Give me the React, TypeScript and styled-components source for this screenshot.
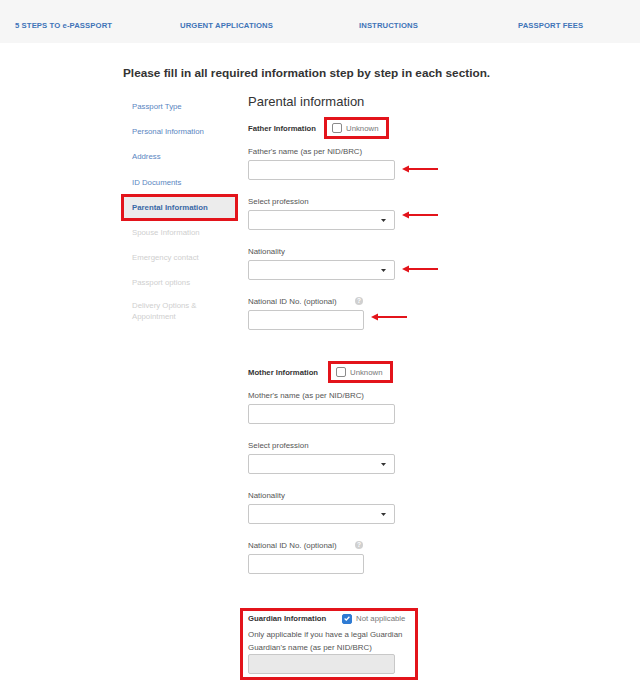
import styled, { createGlobalStyle } from 'styled-components';

const GlobalStyle = createGlobalStyle`
  body {
    margin: 0;
    background: #fff;
    font-family: "Liberation Sans", Arial, sans-serif;
    color: #333;
  }
`

const navItems = ['5 STEPS TO e-PASSPORT', 'URGENT APPLICATIONS', 'INSTRUCTIONS', 'PASSPORT FEES']

const sideItems = [
  { label: 'Passport Type', state: 'done' },
  { label: 'Personal Information', state: 'done' },
  { label: 'Address', state: 'done' },
  { label: 'ID Documents', state: 'done' },
  { label: 'Parental Information', state: 'active' },
  { label: 'Spouse Information', state: 'todo' },
  { label: 'Emergency contact', state: 'todo' },
  { label: 'Passport options', state: 'todo' },
  { label: 'Delivery Options & Appointment', state: 'todo' },
]

const Arrow = ({ shift = 0 }: { shift?: number }) => (
  <ArrowSvg width="36" height="8" viewBox="0 0 36 8" $shift={shift}>
    <path d="M5 4 H36" stroke="#e3141b" strokeWidth="2" />
    <path d="M0 4 L7 0.5 L7 7.5 Z" fill="#e3141b" />
  </ArrowSvg>
)

const Caret = () => (
  <CaretSvg width="5" height="3" viewBox="0 0 5 3">
    <path d="M0 0 H5 L2.5 3 Z" fill="#333" />
  </CaretSvg>
)

const HelpIcon = () => (
  <HelpSvg width="8" height="8" viewBox="0 0 8 8">
    <circle cx="4" cy="4" r="4" fill="#d0d0d0" />
    <text x="4" y="6.3" fontSize="6.5" fontWeight="bold" textAnchor="middle" fill="#fff" fontFamily="Liberation Sans, sans-serif">?</text>
  </HelpSvg>
)

interface FieldProps {
  label: string
  kind?: 'text' | 'select'
  short?: boolean
  help?: boolean
  arrow?: boolean
  arrowShift?: number
}

const Field = ({ label, kind = 'text', short, help, arrow, arrowShift }: FieldProps) => (
  <FieldGroup>
    <LabelRow $short={short}>
      <FieldLabel>{label}</FieldLabel>
      {help && <HelpIcon />}
    </LabelRow>
    <ControlRow>
      <Control $short={short}>
        {kind === 'select' && <Caret />}
      </Control>
      {arrow && <Arrow shift={arrowShift} />}
    </ControlRow>
  </FieldGroup>
)

const PersonBlock = ({ who, arrows, titleWidth }: { who: string, arrows?: boolean, titleWidth: number }) => (
  <>
    <SectionRow>
      <SectionTitle $width={titleWidth}>{who} Information</SectionTitle>
      <Highlight>
        <CheckBox />
        <CheckLabel>Unknown</CheckLabel>
      </Highlight>
    </SectionRow>
    <FirstField>
      <Field label={`${who}'s name (as per NID/BRC)`} arrow={arrows} arrowShift={-1} />
    </FirstField>
    <Field label="Select profession" kind="select" arrow={arrows} arrowShift={-5} />
    <Field label="Nationality" kind="select" arrow={arrows} arrowShift={-1} />
    <Field label="National ID No. (optional)" short help arrow={arrows} arrowShift={-3} />
  </>
)

export default function App() {
  return (
    <>
      <GlobalStyle />
      <NavBar>
        {navItems.map((item) => <NavLink key={item}>{item}</NavLink>)}
      </NavBar>
      <Main>
        <PageTitle>Please fill in all required information step by step in each section.</PageTitle>
        <Columns>
          <Sidebar>
            {sideItems.map((item) => (
              <SideItem key={item.label} $state={item.state}>{item.label}</SideItem>
            ))}
          </Sidebar>
          <Form>
            <FormTitle>Parental information</FormTitle>
            <PersonBlock who="Father" arrows titleWidth={76} />
            <MotherSpacer />
            <PersonBlock who="Mother" titleWidth={80} />
            <GuardianBox>
              <GuardianHead>
                <SectionTitle $width={90}>Guardian Information</SectionTitle>
                <CheckBox $checked>
                  <svg width="6" height="5" viewBox="0 0 6 5">
                    <path d="M0.6 2.5 L2.3 4 L5.4 0.8" stroke="#fff" strokeWidth="1.3" fill="none" />
                  </svg>
                </CheckBox>
                <CheckLabel>Not applicable</CheckLabel>
              </GuardianHead>
              <GuardianNote>Only applicable if you have a legal Guardian</GuardianNote>
              <GuardianNote>Guardian's name (as per NID/BRC)</GuardianNote>
              <Control $disabled />
            </GuardianBox>
          </Form>
        </Columns>
      </Main>
    </>
  )
}

const NavBar = styled.nav`
  height: 43px;
  background: #f6f6f6;
  display: grid;
  grid-template-columns: 165px 179px 159px auto;
  align-items: center;
  padding-left: 15px;
  padding-top: 8px;
  box-sizing: border-box;
`

const NavLink = styled.a`
  font-size: 7.7px;
  font-weight: bold;
  color: #3f74b8;
  letter-spacing: 0.1px;
  white-space: nowrap;
`

const Main = styled.main`
  padding: 23px 0 0 121px;
`

const PageTitle = styled.h1`
  margin: 0 0 0 2px;
  font-size: 11.8px;
  line-height: 15px;
  font-weight: bold;
  color: #333;
`

const Columns = styled.div`
  display: flex;
  gap: 10px;
  margin-top: 13px;
`

const Sidebar = styled.ul`
  list-style: none;
  margin: 0;
  padding: 0;
  width: 117px;
  flex-shrink: 0;
`

const SideItem = styled.li<{ $state: string }>`
  height: 25.2px;
  display: flex;
  align-items: center;
  padding-left: 11px;
  padding-right: 8px;
  font-size: 7.8px;
  line-height: 11px;
  color: ${p => p.$state === 'todo' ? '#cfcfcf' : p.$state === 'active' ? '#3a69a6' : '#5a86bf'};
  font-weight: ${p => p.$state === 'active' ? 'bold' : 'normal'};
  ${p => p.$state === 'active' && `
    background: #ececec;
    border: 3px solid #e3141b;
    height: 21.2px;
    margin: -1px 0;
    padding-left: 8px;
  `}
  &:last-child {
    padding-top: 3px;
  }
`

const Form = styled.div`
  display: flex;
  flex-direction: column;
  width: 200px;
`

const FormTitle = styled.h2`
  margin: 0;
  font-size: 13px;
  line-height: 16px;
  font-weight: normal;
  color: #333;
`

const SectionRow = styled.div`
  display: flex;
  align-items: center;
  margin-top: 7px;
`

const SectionTitle = styled.span<{ $width: number }>`
  font-size: 7.7px;
  font-weight: bold;
  color: #333;
  width: ${p => p.$width}px;
  flex-shrink: 0;
`

const Highlight = styled.div`
  display: flex;
  align-items: center;
  gap: 4px;
  width: 54px;
  height: 16px;
  padding-left: 5px;
  border: 3px solid #e3141b;
`

const CheckBox = styled.span<{ $checked?: boolean }>`
  width: 10px;
  height: 10px;
  box-sizing: border-box;
  border-radius: 2px;
  border: 1px solid ${p => p.$checked ? '#2f7bd3' : '#8a8a8a'};
  background: ${p => p.$checked ? '#2f7bd3' : '#fff'};
  display: flex;
  align-items: center;
  justify-content: center;
  flex-shrink: 0;
`

const CheckLabel = styled.span`
  font-size: 7.8px;
  color: #777;
  white-space: nowrap;
`

const FirstField = styled.div`
  margin-top: -9px;
`

const FieldGroup = styled.div`
  display: flex;
  flex-direction: column;
  margin-top: 16px;
`

const LabelRow = styled.div<{ $short?: boolean }>`
  display: flex;
  align-items: center;
  justify-content: space-between;
  width: ${p => p.$short ? '115px' : 'auto'};
  height: 10px;
  margin-bottom: 4px;
`

const FieldLabel = styled.span`
  font-size: 7.9px;
  color: #555;
`

const HelpSvg = styled.svg`
  display: block;
`

const ControlRow = styled.div`
  display: flex;
  align-items: center;
`

const Control = styled.div<{ $short?: boolean, $disabled?: boolean }>`
  width: ${p => p.$short ? '116px' : '147px'};
  height: 20px;
  box-sizing: border-box;
  border: 1px solid #c8c8c8;
  border-radius: 2px;
  background: ${p => p.$disabled ? '#e9e9e9' : '#fff'};
  display: flex;
  align-items: center;
  justify-content: flex-end;
  padding-right: 8px;
  flex-shrink: 0;
`

const CaretSvg = styled.svg`
  display: block;
  margin-top: 1px;
`

const ArrowSvg = styled.svg<{ $shift: number }>`
  display: block;
  margin-left: 7px;
  transform: translateY(${p => p.$shift}px);
`

const MotherSpacer = styled.div`
  height: 24px;
`

const GuardianBox = styled.div`
  margin: 34px 0 0 -8px;
  width: 167px;
  border: 3px solid #e3141b;
  padding: 1px 0 3px 5px;
  box-sizing: content-box;
`

const GuardianHead = styled.div`
  display: flex;
  align-items: center;
  gap: 4px;
  height: 13px;
  margin-bottom: 3px;
`

const GuardianNote = styled.div`
  font-size: 7.9px;
  line-height: 13px;
  color: #555;
`
